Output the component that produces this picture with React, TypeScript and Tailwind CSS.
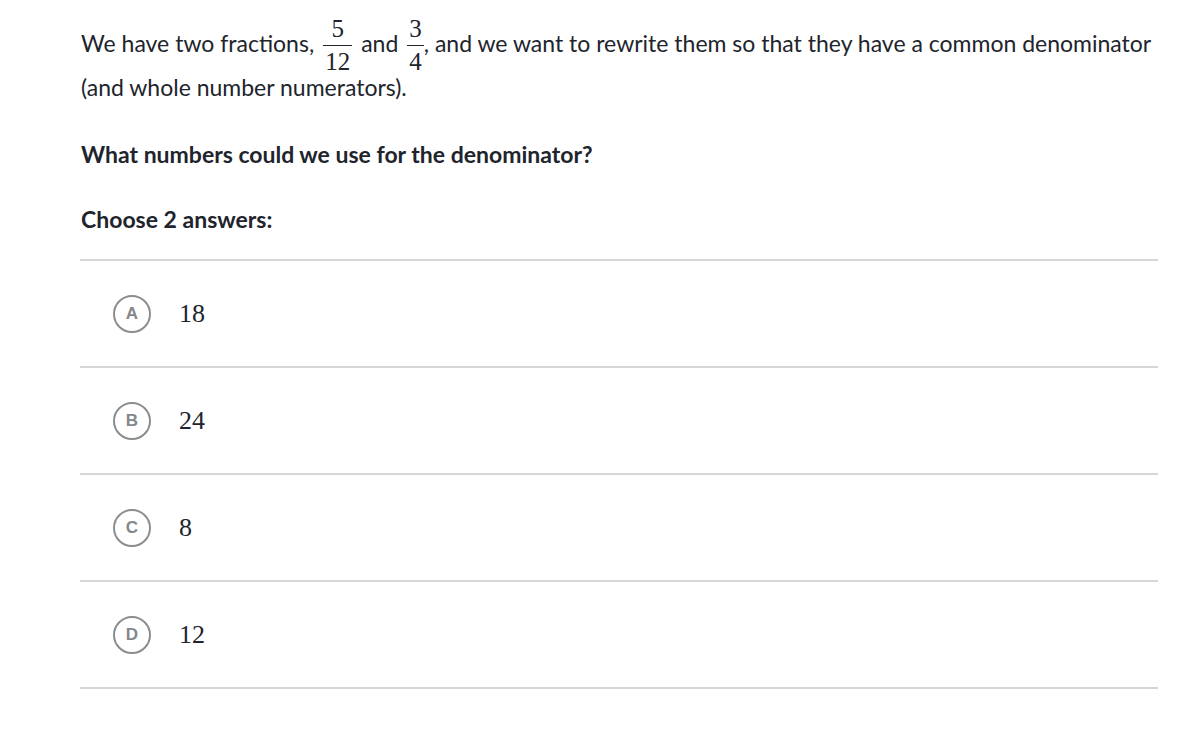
import type { ReactNode } from "react";

const choices = [
  { letter: "A", value: "18" },
  { letter: "B", value: "24" },
  { letter: "C", value: "8" },
  { letter: "D", value: "12" },
];

// fraction hangs over the line box (negative margins) so it does not push line 2 down
function Frac({ num, den }: { num: ReactNode; den: ReactNode }) {
  return (
    <span className="mx-[9px] -mb-[12px] -mt-[13px] inline-flex flex-col items-center align-middle font-['Liberation_Serif',serif] text-[25px] leading-[24px]">
      <span className="h-[24px] px-[2px]">{num}</span>
      <span className="mb-[4px] mt-[4px] h-px w-full bg-[#21242c]" />
      <span className="h-[24px] px-[2px]">{den}</span>
    </span>
  );
}

export default function App() {
  return (
    <div className="min-h-[741px] bg-white font-['Lato','Noto_Sans',sans-serif] text-[#21242c]">
      <div className="pl-[81px] pt-[21px]">
        <p className="text-[23px] leading-[44px]">
          We have two fractions,
          <Frac num="5" den="12" />
          and
          <Frac num="3" den="4" />
          <span className="-ml-[9px]">, and we want to rewrite them so that they have a common denominator</span>
          <br />
          (and whole number numerators).
        </p>
        <p className="mt-[23px] text-[23px] font-bold leading-[44px]">
          What numbers could we use for the denominator?
        </p>
        <p className="mt-[21px] text-[23px] font-bold leading-[44px]">Choose 2 answers:</p>
      </div>

      <ul className="ml-[80px] mt-[18px] w-[1078px] border-b-2 border-[#d6d6d6]">
        {choices.map((c) => (
          <li
            key={c.letter}
            className="flex h-[107px] items-center gap-[28px] border-t-2 border-[#d6d6d6] pl-[33px]"
          >
            <span className="flex size-[38px] items-center justify-center rounded-full border-2 border-[#8b8d91] font-['Liberation_Sans',sans-serif] text-[17px] font-bold text-[#85878b]">
              {c.letter}
            </span>
            <span className="font-['Liberation_Serif',serif] text-[26px]">{c.value}</span>
          </li>
        ))}
      </ul>
    </div>
  );
}
